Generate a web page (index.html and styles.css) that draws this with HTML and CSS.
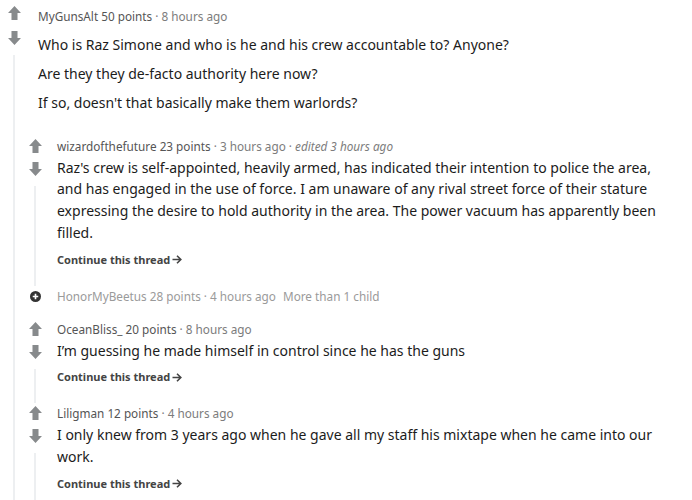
FILE: index.html
```html
<!DOCTYPE html>
<html lang="en">
<head>
  <meta charset="UTF-8">
  <title>Comments</title>
  <link rel="stylesheet" href="styles.css">
</head>
<body>

<div class="thread">
  <div class="comment top">
    <div class="rail">
      <svg class="vote" viewBox="0 0 12 13"><path d="M6 0 L12 6.5 H8.8 V13 H3.2 V6.5 H0 Z"/></svg>
      <svg class="vote down" viewBox="0 0 12 13"><path d="M6 13 L12 6.5 H8.8 V0 H3.2 V6.5 H0 Z"/></svg>
      <div class="line"></div>
    </div>
    <div class="main">
      <div class="meta"><span class="user">MyGunsAlt</span> <span class="pts">50 points</span> · <span class="time">8 hours ago</span></div>
      <div class="text">
        <p>Who is Raz Simone and who is he and his crew accountable to? Anyone?</p>
        <p>Are they they de-facto authority here now?</p>
        <p>If so, doesn't that basically make them warlords?</p>
      </div>

      <div class="children">
        <div class="comment">
          <div class="rail">
            <svg class="vote" viewBox="0 0 12 13"><path d="M6 0 L12 6.5 H8.8 V13 H3.2 V6.5 H0 Z"/></svg>
            <svg class="vote down" viewBox="0 0 12 13"><path d="M6 13 L12 6.5 H8.8 V0 H3.2 V6.5 H0 Z"/></svg>
            <div class="line"></div>
          </div>
          <div class="main">
            <div class="meta"><span class="user">wizardofthefuture</span> <span class="pts">23 points</span> · <span class="time">3 hours ago</span> · <em class="time">edited 3 hours ago</em></div>
            <div class="text">
              <p>Raz's crew is self-appointed, heavily armed, has indicated their intention to police the area, and has engaged in the use of force. I am unaware of any rival street force of their stature expressing the desire to hold authority in the area. The power vacuum has apparently been filled.</p>
            </div>
            <a class="more" href="#">Continue this thread <svg viewBox="0 0 10 9"><path d="M0.5 4.5 H9 M5 0.8 L8.8 4.5 L5 8.2"/></svg></a>
          </div>
        </div>

        <div class="comment collapsed">
          <div class="rail">
            <svg class="expand" viewBox="0 0 12 12"><circle cx="6" cy="6" r="6"/><path d="M6 3 V9 M3 6 H9"/></svg>
          </div>
          <div class="main">
            <div class="meta"><span class="user">HonorMyBeetus</span> <span class="pts">28 points</span> · <span class="time">4 hours ago</span> <span class="kids">More than 1 child</span></div>
          </div>
        </div>

        <div class="comment">
          <div class="rail">
            <svg class="vote" viewBox="0 0 12 13"><path d="M6 0 L12 6.5 H8.8 V13 H3.2 V6.5 H0 Z"/></svg>
            <svg class="vote down" viewBox="0 0 12 13"><path d="M6 13 L12 6.5 H8.8 V0 H3.2 V6.5 H0 Z"/></svg>
            <div class="line"></div>
          </div>
          <div class="main">
            <div class="meta"><span class="user">OceanBliss_</span> <span class="pts">20 points</span> · <span class="time">8 hours ago</span></div>
            <div class="text">
              <p>I’m guessing he made himself in control since he has the guns</p>
            </div>
            <a class="more" href="#">Continue this thread <svg viewBox="0 0 10 9"><path d="M0.5 4.5 H9 M5 0.8 L8.8 4.5 L5 8.2"/></svg></a>
          </div>
        </div>

        <div class="comment">
          <div class="rail">
            <svg class="vote" viewBox="0 0 12 13"><path d="M6 0 L12 6.5 H8.8 V13 H3.2 V6.5 H0 Z"/></svg>
            <svg class="vote down" viewBox="0 0 12 13"><path d="M6 13 L12 6.5 H8.8 V0 H3.2 V6.5 H0 Z"/></svg>
            <div class="line"></div>
          </div>
          <div class="main">
            <div class="meta"><span class="user">Liligman</span> <span class="pts">12 points</span> · <span class="time">4 hours ago</span></div>
            <div class="text">
              <p>I only knew from 3 years ago when he gave all my staff his mixtape when he came into our work.</p>
            </div>
            <a class="more" href="#">Continue this thread <svg viewBox="0 0 10 9"><path d="M0.5 4.5 H9 M5 0.8 L8.8 4.5 L5 8.2"/></svg></a>
          </div>
        </div>
      </div>
    </div>
  </div>
</div>

</body>
</html>
```

FILE: styles.css
```css
body { margin: 0; background: #fff; font-family: "Noto Sans", sans-serif; color: #1c1c1c; }
.thread { width: 668px; height: 500px; overflow: hidden; padding: 6px 0 0 4px; box-sizing: border-box; }

.comment { display: flex; }
.rail { width: 20px; flex: none; display: flex; flex-direction: column; align-items: center; }
.vote { width: 13px; height: 14px; fill: #878a8c; margin-top: 0; }
.vote.down { margin-top: 11px; }
.line { flex: 1; width: 2px; background: #edeff1; margin-top: 10px; }

.main { flex: 1; min-width: 0; }
.top > .main > .meta,
.top > .main > .text { padding-left: 14px; }

.meta { font-size: 11.75px; line-height: 20px; color: #7c7c7c; }
.meta .user, .meta .pts { color: #555; }
.meta .time { color: #7c7c7c; }
.meta em { font-style: italic; }

.text { font-size: 14px; line-height: 21.7px; margin-top: 8px; }
.text p { margin: 0 0 7.3px; }
.top > .main > .text p:last-child { margin-bottom: 22px; }

.children { margin-left: 1px; }
.children .comment .main { padding-left: 12px; }
.children .vote { margin-top: 3px; }
.children .vote.down { margin-top: 9px; }
.children .text { margin-top: 1px; }
.children .text p { margin-bottom: 5px; }

.more { display: block; font-size: 11px; font-weight: bold; color: #444; text-decoration: none; line-height: 20px; padding: 1px 0 16px; }
.more svg { width: 10px; height: 9px; fill: none; stroke: #444; stroke-width: 1.6; vertical-align: -0.5px; margin-left: -1px; }

.collapsed { margin-bottom: 13px; }
.collapsed .meta, .collapsed .meta span { color: #9a9a9a; }
.expand { width: 11px; height: 11px; margin-top: 5px; fill: #333; stroke: #fff; stroke-width: 1.8; }
.expand circle { stroke: none; }
.kids { margin-left: 4px; }
```
